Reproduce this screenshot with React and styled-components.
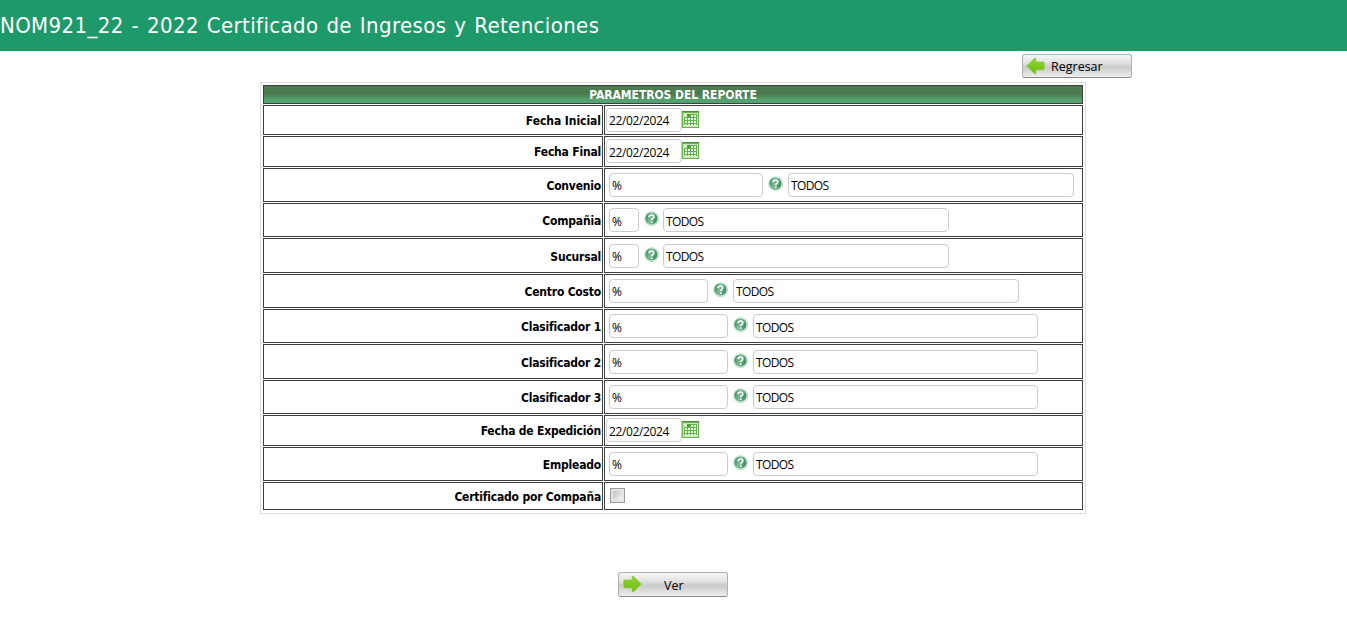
import React from "react";
import styled, { createGlobalStyle } from "styled-components";

const Global = createGlobalStyle`
  *, *::before, *::after { box-sizing: border-box; }
  html, body { margin: 0; padding: 0; background: #fff; }
  body { overflow: hidden; }
`;

const tahoma = `"DejaVu Sans Condensed", "DejaVu Sans", sans-serif`;
const segoe = `"Open Sans", "Noto Sans", sans-serif`;

const Header = styled.header`
  height: 51px;
  background: #1e9969;
  color: #fff;
  font: 22px/51px ${tahoma};
  font-stretch: condensed;
  white-space: nowrap;
`;

const Title = styled.span`
  letter-spacing: 0.37px;
  word-spacing: 1.3px;
`;

const Toolbar = styled.div`
  display: flex;
  justify-content: flex-end;
  width: 1132px;
  height: 31px;
  padding-top: 3px;
`;

const Button = styled.button`
  display: flex;
  align-items: center;
  width: 110px;
  height: ${(p) => p.$height}px;
  padding: 0 0 0 ${(p) => p.$inset}px;
  border: 1px solid #b0b0b0;
  border-bottom-color: #8c8c8c;
  border-radius: 3px;
  background: linear-gradient(#f6f6f6 0%, #e2e2e2 35%, #cacaca 55%, #dadada 75%, #efefef 100%);
  color: #000;
  font: 12.5px/20px ${segoe};
  svg { flex: none; margin-top: -1px; }
`;

const ButtonText = styled.span`
  margin-left: ${(p) => p.$gap}px;
  padding-top: 2px;
`;

const Panel = styled.form`
  display: flex;
  flex-direction: column;
  gap: 1px;
  width: 826px;
  margin-left: 260px;
  padding: 2px 2px 3px;
  border: 1px solid #ddd;
`;

const Heading = styled.div`
  height: 19px;
  border: 1px solid #3f3f3f;
  background: linear-gradient(#4c7b50 0, #4c7b50 48%, #54a26f 82%, #54a26f 100%);
  color: #fff;
  font: bold 12px/19px ${tahoma};
  font-stretch: condensed;
  text-align: center;
  letter-spacing: -0.05px;
`;

const Row = styled.div`
  display: grid;
  grid-template-columns: 340px 479px;
  column-gap: 1px;
  height: ${(p) => p.$height}px;
`;

const Cell = styled.div`
  display: flex;
  border: 1px solid #3f3f3f;
`;

const LabelCell = styled(Cell)`
  align-items: center;
  justify-content: flex-end;
  padding: ${(p) => (p.$low ? 2 : 0)}px 1px 0 0;
  font: bold 12px/16px ${tahoma};
  font-stretch: condensed;
  color: #000;
`;

const Label = styled.label`
  letter-spacing: ${(p) => p.$spacing}px;
`;

const DateCell = styled(Cell)`
  align-items: flex-start;
  padding: 2px 0 0 1px;
  svg { margin-top: 3px; }
`;

const LookupCell = styled(Cell)`
  align-items: flex-start;
  padding: ${(p) => p.$top}px 0 0 4px;
  svg { flex: none; margin: 3px ${(p) => p.$gap}px 0 5px; }
`;

const CheckCell = styled(Cell)`
  align-items: flex-start;
  padding: 5px 0 0 5px;
`;

const Field = styled.input`
  display: block;
  width: ${(p) => p.$width}px;
  height: 24px;
  margin: 0;
  padding: ${(p) => (p.$low ? "2px" : "0")} 0 0 2px;
  border: 1px solid #ccc;
  border-radius: 4px;
  outline: none;
  background: #fff;
  color: #000;
  font: 12px/20px ${segoe};
  letter-spacing: ${(p) => p.$spacing || 0}px;
`;

const Check = styled.input.attrs({ type: "checkbox" })`
  appearance: none;
  width: 15px;
  height: 15px;
  margin: 0;
  border: 1px solid #9a9a9a;
  background: linear-gradient(135deg, #c2c2c2, #f4f4f4) 2px 2px / 9px 9px no-repeat #e4e4e4;
`;

const Footer = styled.footer`
  display: flex;
  padding: 58px 0 0 618px;
`;

function Arrow({ right }) {
  return (
    <svg width="19" height="18" viewBox="0 0 19 18">
      <defs>
        <linearGradient id="leaf" x1="0" y1="0" x2="0" y2="1">
          <stop offset="0" stopColor="#91d62f" />
          <stop offset="1" stopColor="#6cbd10" />
        </linearGradient>
      </defs>
      <path
        d="M.8 9 8.600 1.200q1.200-.7 1.200.7V5h7.400q1 0 1 1v5.800q0 1-1 1H9.800v3.300q0 1.400-1.200.7Z"
        transform={right ? "translate(19 0) scale(-1 1)" : undefined}
        fill="url(#leaf)"
        stroke="#7cc827"
        strokeWidth=".6"
      />
    </svg>
  );
}

function Calendar() {
  return (
    <svg width="17" height="17" viewBox="0 0 17 17" shapeRendering="crispEdges">
      <path d="M0 0h17v17H0Z" fill="#6db356" />
      <path d="M0 0h17v1H0Z" fill="#4c9138" />
      <path d="M1 2h15v14H1Z" fill="#c5e5b5" />
      <path d="M2 3h13v12H2Z" fill="#daf0cf" />
      <path d="M5 3h10v3H5ZM2 6h13v8H2Z" fill="#67b050" />
      <path d="M5 3h3v3H5Z" fill="#4f9c3c" />
      <path
        d="M9 4h2v2H9ZM12 4h2v2h-2ZM3 7h2v2H3ZM6 7h2v2H6ZM9 7h2v2H9ZM12 7h2v2h-2ZM3 10h2v2H3ZM6 10h2v2H6ZM9 10h2v2H9ZM12 10h2v2h-2ZM3 13h2v1H3ZM6 13h2v1H6ZM9 13h2v1H9ZM12 13h2v1h-2Z"
        fill="#e2f3d9"
      />
    </svg>
  );
}

function Help() {
  return (
    <svg width="15" height="15" viewBox="0 0 15 15">
      <defs>
        <linearGradient id="ball" x1="0" y1="0" x2="1" y2="0.300">
          <stop offset="0" stopColor="#2f8053" />
          <stop offset=".5" stopColor="#7dbd96" />
          <stop offset="1" stopColor="#3f8f62" />
        </linearGradient>
      </defs>
      <circle cx="7.700" cy="7.700" r="7" fill="#d0e9da" stroke="#a5d4b6" strokeWidth=".6" />
      <ellipse cx="7.400" cy="7.600" rx="6" ry="6" fill="url(#ball)" />
      <path d="M4.900 6.100Q5.200 4 7.500 4 9.800 4 9.800 5.800 9.800 7 8.500 7.700 7.800 8.200 7.800 9.300" fill="none" stroke="#fff" strokeWidth="1.600" />
      <circle cx="7.800" cy="11.300" r="1" fill="#fff" />
    </svg>
  );
}

const rows = [
  { label: "Fecha Inicial", kind: "date", height: 30, spacing: -0.05 },
  { label: "Fecha Final", kind: "date", height: 31, low: true },
  { label: "Convenio", kind: "lookup", height: 34, width: 154 },
  { label: "Compañia", kind: "lookup", height: 34, width: 30, gap: 4, low: true },
  { label: "Sucursal", kind: "lookup", height: 35, width: 30, gap: 4, top: 5 },
  { label: "Centro Costo", kind: "lookup", height: 34, width: 99 },
  { label: "Clasificador 1", kind: "lookup", height: 34, width: 119, low: true },
  { label: "Clasificador 2", kind: "lookup", height: 35, width: 119, top: 5 },
  { label: "Clasificador 3", kind: "lookup", height: 34, width: 119 },
  { label: "Fecha de Expedición", kind: "date", height: 31, low: true },
  { label: "Empleado", kind: "lookup", height: 34, width: 119 },
  { label: "Certificado por Compaña", kind: "check", height: 28 },
];

function Value({ row }) {
  if (row.kind === "date") {
    return (
      <DateCell>
        <Field $width={76} $low={row.low} $spacing={-0.38} defaultValue="22/02/2024" />
        <Calendar />
      </DateCell>
    );
  }
  if (row.kind === "check") {
    return (
      <CheckCell>
        <Check />
      </CheckCell>
    );
  }
  return (
    <LookupCell $top={row.top || 4} $gap={row.gap || 5}>
      <Field $width={row.width} $low={row.low} defaultValue="%" />
      <Help />
      <Field
        $width={row.width === 119 ? 285 : 286}
        $low={row.low}
        $spacing={-0.6}
        defaultValue="TODOS"
      />
    </LookupCell>
  );
}

export default function App() {
  return (
    <>
      <Global />
      <Header>
        <Title>NOM921_22 - 2022 Certificado de Ingresos y Retenciones</Title>
      </Header>
      <Toolbar>
        <Button type="button" $height={24} $inset={3}>
          <Arrow />
          <ButtonText $gap={6}>Regresar</ButtonText>
        </Button>
      </Toolbar>
      <Panel>
        <Heading>PARAMETROS DEL REPORTE</Heading>
        {rows.map((row) => (
          <Row key={row.label} $height={row.height}>
            <LabelCell $low={row.height !== 31}>
              <Label $spacing={row.spacing || -0.2}>{row.label}</Label>
            </LabelCell>
            <Value row={row} />
          </Row>
        ))}
      </Panel>
      <Footer>
        <Button type="button" $height={25} $inset={4}>
          <Arrow right />
          <ButtonText $gap={22}>Ver</ButtonText>
        </Button>
      </Footer>
    </>
  );
}
